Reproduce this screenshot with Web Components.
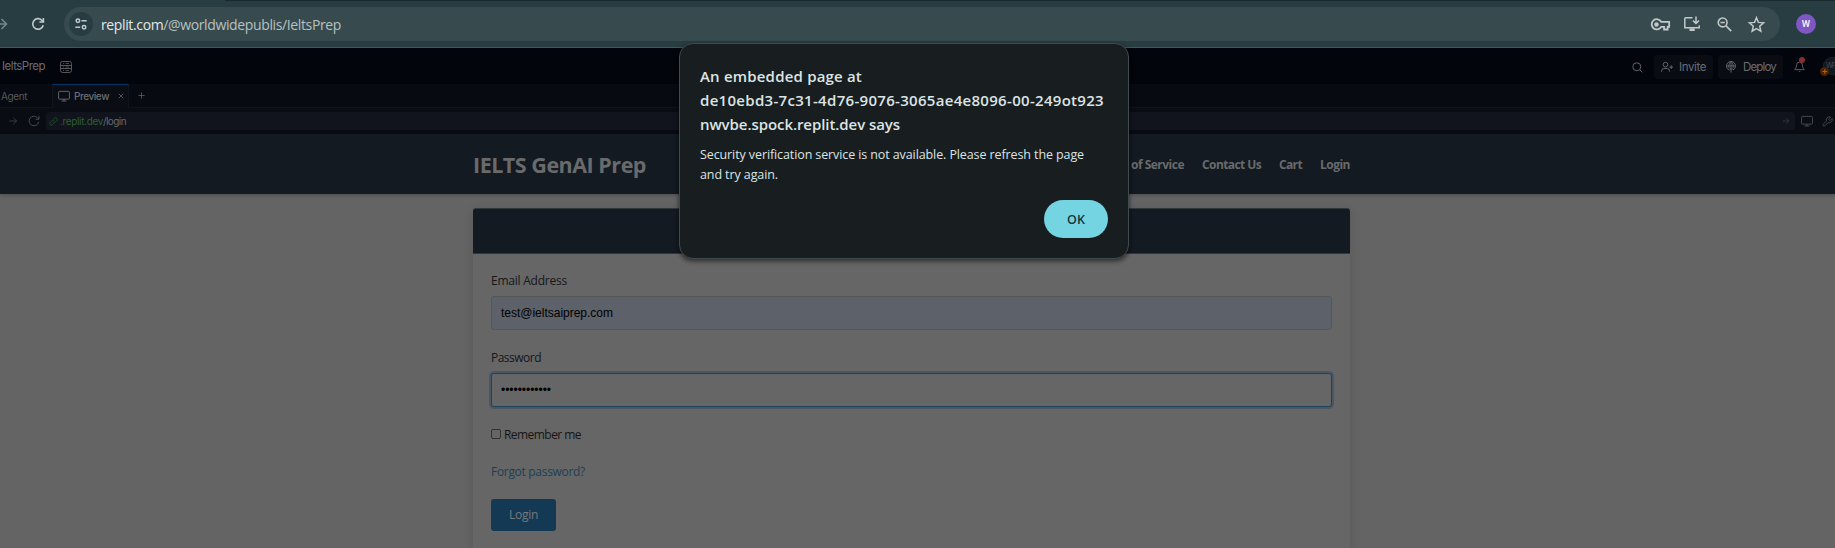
<!DOCTYPE html>
<html lang="en"><head><meta charset="utf-8"><title>IeltsPrep</title>
<style>body{margin:0;background:#646464;overflow:hidden;width:1835px;height:548px;font-family:"Open Sans","Noto Sans",sans-serif}</style>
</head><body><app-window></app-window>
<script>
const define=(name,html)=>customElements.define(name,class extends HTMLElement{
  constructor(){super();this.attachShadow({mode:'open'}).innerHTML=html}
});

/* One line of text, tracked so that it fills the given width. */
customElements.define('fit-text',class extends HTMLElement{
  constructor(){super();this.attachShadow({mode:'open'}).innerHTML='<style>:host{display:block;white-space:pre;flex:none}span{display:inline-block}</style><span><slot></slot></span>'}
  connectedCallback(){
    const w=+this.getAttribute('w'),s=this.shadowRoot.querySelector('span');
    this.style.width=w+'px';
    requestAnimationFrame(()=>{const n=this.textContent.length;s.style.letterSpacing=((w-s.getBoundingClientRect().width)/n)+'px'});
  }
});

const paths={
 forward:'<path d="M-4 8H6.500M1.500 3l5 5-5 5"/>',
 arrow:'<path d="M2 8h12M8.500 2.800L13.800 8l-5.300 5.200"/>',
 reload:'<path d="M13.2 9.2A5.3 5.3 0 1 1 11.8 4.2L13.3 5.7M13.4 2v4H9.4"/>',
 refresh:'<path d="M14.2 9.200A6.400 6.400 0 1 1 12.600 3.600L14.400 5.400M14.600 1.300v4.400h-4.400"/>',
 tune:'<circle cx="4.5" cy="4.2" r="2"/><path d="M8.500 4.2H14.500M1.500 11.8h5.500"/><circle cx="11.5" cy="11.800" r="2"/>',
 key:'<path d="M8.600 5.700A4.300 4.300 0 1 0 8.600 10H11v2.200h3V10h1.300V5.700z"/><circle cx="4.6" cy="8" r="1.200" fill="currentColor"/>',
 install:'<path d="M8.500 1.800H1.800a1 1 0 0 0-1 1v8.900h14.400V9.300"/><path d="M5.500 13.700h5.200" stroke-width="2.600"/><path d="M12 .5v6.800M9 4.600l3 2.900 3-2.900"/>',
 zoomout:'<circle cx="6" cy="5.800" r="4.700"/><path d="M3.700 5.800h4.600M9.400 9.200l5.800 5.800"/>',
 star:'<path d="M8 1.6l1.800 4.400 4.900.4-3.700 3.200 1.100 4.700L8 11.800l-4.100 2.500L5 9.600 1.300 6.400 6.200 6z"/>',
 db:'<rect x=".5" y=".5" width="11" height="11" rx="2"/><path d="M1 4.500h10M1 7.500h10"/><path d="M3 2.500h1M5.500 2.500h3.500M3 6h1M5.500 6h3.500M3 9.500h1M5.500 9.500h3.500" stroke-width=".8"/>',
 monitor:'<rect x=".8" y="1.800" width="14.400" height="10.400" rx="1.200"/><path d="M8 12.200v2.500M4.800 14.700h6.400"/>',
 close:'<path d="M2 2l12 12M14 2L2 14"/>',
 plus:'<path d="M8 1v14M1 8h14"/>',
 link:'<path d="M6.4 9.6a3 3 0 0 0 4.300 0l3-3a3 3 0 0 0-4.300-4.300L7.700 4M9.600 6.400a3 3 0 0 0-4.300 0l-3 3A3 3 0 0 0 6.600 13.700L8.300 12"/>',
 search:'<circle cx="7" cy="7" r="5.800"/><path d="M11.300 11.300l3.700 3.700"/>',
 invite:'<circle cx="6" cy="4.800" r="3.100"/><path d="M.8 14.300v-1.300a3 3 0 0 1 3-3h4.400a3 3 0 0 1 3 3v1.300M13.600 5.700v5M11.100 8.200h5"/>',
 deploy:'<path d="M5.300 12A6 6 0 1 1 10.700 12M2 6.600h12M8 .6C4.600 3.500 4.600 8.500 5.800 10.300M8 .6C11.400 3.500 11.400 8.500 10.200 10.300M8 .6V15.500M5.800 12.200l2.200-2.200 2.200 2.200"/>',
 bell:'<path d="M12.300 6a4.300 4.300 0 0 0-8.600 0c0 4.500-2.700 6.500-2.700 6.500h14S12.300 10.500 12.300 6M6.700 15q1.300.9 2.600 0"/>',
 wrench:'<path d="M10 4.200a.8.8 0 0 0 0 1.100l1 1a.8.8 0 0 0 1.100 0L14.700 3.600a4.500 4.500 0 0 1-5.900 5.900L4.100 14.300a1.600 1.600 0 0 1-2.300-2.300l4.700-4.700A4.500 4.500 0 0 1 12.500 1.500z"/>'
};
customElements.define('ui-icon',class extends HTMLElement{
  constructor(){super();this.attachShadow({mode:'open'})}
  connectedCallback(){const s=this.getAttribute('s')||16,k=this.getAttribute('k')||1.2,g=this.getAttribute('grid')||16;
   this.shadowRoot.innerHTML=`<style>:host{display:block;flex:none;width:${s}px;height:${s}px}svg{display:block;overflow:visible}</style><svg width="${s}" height="${s}" viewBox="0 0 ${g} ${g}" fill="none" stroke="currentColor" stroke-width="${k}">${paths[this.getAttribute('n')]}</svg>`}
});

define('browser-bar',`<style>
:host{display:flex;box-sizing:border-box;height:48px;background:linear-gradient(90deg,#283d41 225px,#182a2d 225px) 0 0/100% 1px no-repeat,#283d41;border-bottom:1px solid #465659;padding:7px 0 0;color:#c1c9ca}
.nav{width:64px;display:flex;height:34px;align-items:center}
.nav ui-icon:first-child{color:#73878a}.nav ui-icon:last-child{margin-left:14px}
.pill{box-sizing:border-box;width:1716px;height:34px;border-radius:17px;background:#374a4e;display:flex;align-items:center;padding-left:5px}
.site{width:24px;height:24px;border-radius:50%;background:#283d41;display:flex;align-items:center;justify-content:center}
.url{font-size:14px;line-height:20px;margin:1px 0 0 8px;color:#b8c1c2}.url b{font-weight:400;color:#e3e9e9}
.tools{margin-left:auto;display:flex;align-items:center;padding-right:15px}
.av{width:20px;height:20px;border-radius:50%;background:#7e57c2;color:#f2edf8;font:600 9.500px/20px Roboto;text-align:center;margin:7px 0 0 16px}
</style><div class="nav"><ui-icon n="forward" k="1.6"></ui-icon><ui-icon n="reload" k="1.6"></ui-icon></div>
<div class="pill"><div class="site"><ui-icon n="tune" s="14" k="1.7"></ui-icon></div><fit-text class="url" w="240"><b>replit.com</b>/@worldwidepublis/IeltsPrep</fit-text>
<div class="tools"><ui-icon n="key" s="19" k="1.5" style="margin-right:14px"></ui-icon><ui-icon n="install" s="16" k="1.500" style="margin-right:17px"></ui-icon><ui-icon n="zoomout" s="15" k="1.700" style="margin-right:16px"></ui-icon><ui-icon n="star" s="17" k="1.400"></ui-icon></div></div>
<div class="av">W</div>`);

define('workspace-header',`<style>
:host{display:flex;height:36px;background:#03050c;align-items:center;color:#6b6d71;font:11.5px/16px "Inter","Open Sans",sans-serif}
.name{margin-left:2px}.db{margin:2px 0 0 15px;color:#55575b}
.right{margin-left:auto;display:flex;align-items:center}
.btn{height:24px;margin-top:1px;box-sizing:border-box;border-radius:4px;background:#090c13;display:flex;align-items:center;padding-left:7px}
.bell{position:relative;margin-left:11px}.dot{position:absolute;width:6px;height:6px;border-radius:50%;background:#853033;left:5px;top:-4px}
.wp{width:12px;height:18px;box-sizing:border-box;border:1px solid #1b2027;border-right:0;border-radius:9px 0 0 9px;background:#11171e;font-size:7px;line-height:16px;padding-left:2px;color:#444b52}
.badge{position:absolute;left:-3px;top:10px;width:9px;height:9px;border-radius:50%;background:#4b2108;color:#b95f00;font:bold 9px/8px Inter;text-align:center}
.acct{position:relative;margin-left:18px}
</style><fit-text class="name" w="43">IeltsPrep</fit-text><ui-icon class="db" n="db" s="12" k="1" grid="12"></ui-icon>
<div class="right"><ui-icon n="search" s="11" k="1.300" style="margin:2px 11px 0 0"></ui-icon>
<div class="btn" style="width:59px"><ui-icon n="invite" s="12"></ui-icon><fit-text w="27" style="margin-left:6px">Invite</fit-text></div>
<div class="btn" style="width:65px;margin-left:5px"><ui-icon n="deploy" s="12"></ui-icon><fit-text w="33" style="margin-left:6px">Deploy</fit-text></div>
<div class="bell"><ui-icon n="bell" s="11"></ui-icon><div class="dot"></div></div>
<div class="acct"><div class="wp"><fit-text w="9">WP</fit-text></div><div class="badge">+</div></div></div>`);

define('workspace-tabs',`<style>
:host{display:flex;height:24px;box-sizing:border-box;background:#070a11;border-bottom:1px solid #10131a;color:#56585d;font:10px/14px "Inter",sans-serif;align-items:center}
.agent{margin-left:1px;width:51px}
.tab{box-sizing:border-box;width:77px;height:24px;align-self:flex-start;display:flex;align-items:center;background:#0a0d14;border:1px solid #10141b;border-top:1px solid #073464;border-bottom:0;padding:0 0 2px 5px;color:#6b6d71}
</style><div class="agent"><fit-text w="26">Agent</fit-text></div><div class="tab"><ui-icon n="monitor" s="12"></ui-icon><fit-text w="35" style="margin-left:4px;font-weight:500">Preview</fit-text><ui-icon n="close" s="6" k="2" style="margin-left:9px"></ui-icon></div><ui-icon n="plus" s="7" k="2" style="margin-left:9px"></ui-icon>`);

define('preview-bar',`<style>
:host{display:flex;height:26px;box-sizing:border-box;background:#090c13;color:#4c4f54;font:10px/14px "Inter",sans-serif;align-items:center;padding:0 0 0 8px}
.field{box-sizing:border-box;width:1749px;height:18px;border-radius:3px;background:#11141c;display:flex;align-items:center;padding:0 5px 0 3px;margin-left:6px}
</style><ui-icon n="arrow" s="10" k="1.500" style="color:#3a3d42"></ui-icon><ui-icon n="refresh" s="12" style="margin-left:10px"></ui-icon>
<div class="field"><ui-icon n="link" s="9" k="1.500" style="color:#27512f"></ui-icon><fit-text w="43" style="margin-left:2px;color:#2b5f34">.replit.dev</fit-text><fit-text w="23" style="color:#66686c">/login</fit-text><ui-icon n="arrow" s="8" k="1.500" style="margin-left:auto;color:#3c3f45"></ui-icon></div>
<ui-icon n="monitor" s="12" style="margin-left:6px"></ui-icon><ui-icon n="wrench" s="11" style="margin-left:9px"></ui-icon>`);

define('site-nav',`<style>
:host{display:flex;height:60px;background:#131a21;box-sizing:border-box;padding:0 485px 0 473px;align-items:center;position:relative;box-shadow:0 1px 4px #0004;color:#696a6b}
.brand{font-weight:700;font-size:21.500px;line-height:30px;margin-top:1px}
nav{margin-left:auto;display:flex;gap:18px;font-weight:700;font-size:12px;line-height:18px;margin-top:1px}
</style><fit-text class="brand" w="173">IELTS GenAI Prep</fit-text><nav><fit-text w="53">of Service</fit-text><fit-text w="59">Contact Us</fit-text><fit-text w="23">Cart</fit-text><fit-text w="30">Login</fit-text></nav>`);

define('text-field',`<style>
:host{display:block;font-size:12px;color:#151515}
.box{margin-top:6px;box-sizing:border-box;width:841px;height:34px;border:1px solid #54565a;border-radius:3px;display:flex;align-items:center;padding-left:9px;background:#5d6169;color:#000;font-family:"Liberation Sans",sans-serif}
:host([focused]) .box{background:#666;border-color:#1e4257;box-shadow:0 0 0 2px #485963}
.lab{height:18px;line-height:18px;color:#151719;font-weight:500}
</style><div class="lab"><slot name="label"></slot></div><div class="box"><slot></slot></div>`);

define('login-card',`<style>
:host{display:block;box-sizing:border-box;width:877px;height:356px;margin:14px 0 0 473px;background:#666;border-radius:3px 3px 0 0;box-shadow:0 2px 10px #0002;font-size:12px;color:#151515}
header{box-sizing:border-box;height:46px;background:#131a21;border:1px solid #33383d;border-width:1px 0;border-radius:3px 3px 0 0}
.form{padding:18px}
.check{display:flex;align-items:center;height:18px;margin-top:18px}
.check i{box-sizing:border-box;width:10px;height:10px;border:1px solid #313131;border-radius:2px;margin-right:3px}
.forgot{color:#1d3f55;line-height:18px;margin-top:20px}
.btn{width:65px;height:32px;border-radius:3px;background:#143954;color:#747a7e;margin-top:18px;display:flex;align-items:center;padding:0 0 1px 18px;box-sizing:border-box}
</style><header></header><div class="form">
<text-field><fit-text slot="label" w="76">Email Address</fit-text><fit-text w="112">test@ieltsaiprep.com</fit-text></text-field>
<text-field focused style="margin-top:19px"><fit-text slot="label" w="50">Password</fit-text><fit-text w="50">••••••••••••</fit-text></text-field>
<div class="check"><i></i><fit-text w="77">Remember me</fit-text></div>
<div class="forgot"><fit-text w="94">Forgot password?</fit-text></div>
<div class="btn"><fit-text w="29">Login</fit-text></div></div>`);

define('alert-dialog',`<style>
:host{position:absolute;left:679px;top:43px;box-sizing:border-box;width:450px;height:216px;border:1px solid #414a4c;border-radius:14px;background:#181d1f;box-shadow:0 2px 5px #0009;color:#dde4e5;padding:20px 20px 0;display:flex;flex-direction:column}
.t{font-size:15px;font-weight:600;line-height:24px}.m{font-size:12.500px;line-height:20px;margin-top:9px}
.ok{align-self:flex-end;width:64px;height:38px;border-radius:19px;background:#74d4e1;color:#14373e;margin-top:15px;display:flex;align-items:center;justify-content:center;font-size:12.500px;font-weight:600}
</style><div class="t"><fit-text w="162">An embedded page at</fit-text><fit-text w="404">de10ebd3-7c31-4d76-9076-3065ae4e8096-00-249ot923</fit-text><fit-text w="200">nwvbe.spock.replit.dev says</fit-text></div>
<div class="m"><fit-text w="384">Security verification service is not available. Please refresh the page</fit-text><fit-text w="78">and try again.</fit-text></div>
<div class="ok"><fit-text w="18">OK</fit-text></div>`);

define('app-window',`<style>:host{display:flex;flex-direction:column;position:relative;width:1835px;height:548px;overflow:hidden}:host>*{flex:none}</style>
<browser-bar></browser-bar><workspace-header></workspace-header><workspace-tabs></workspace-tabs><preview-bar></preview-bar><site-nav></site-nav><login-card></login-card><alert-dialog></alert-dialog>`);
</script></body></html>
